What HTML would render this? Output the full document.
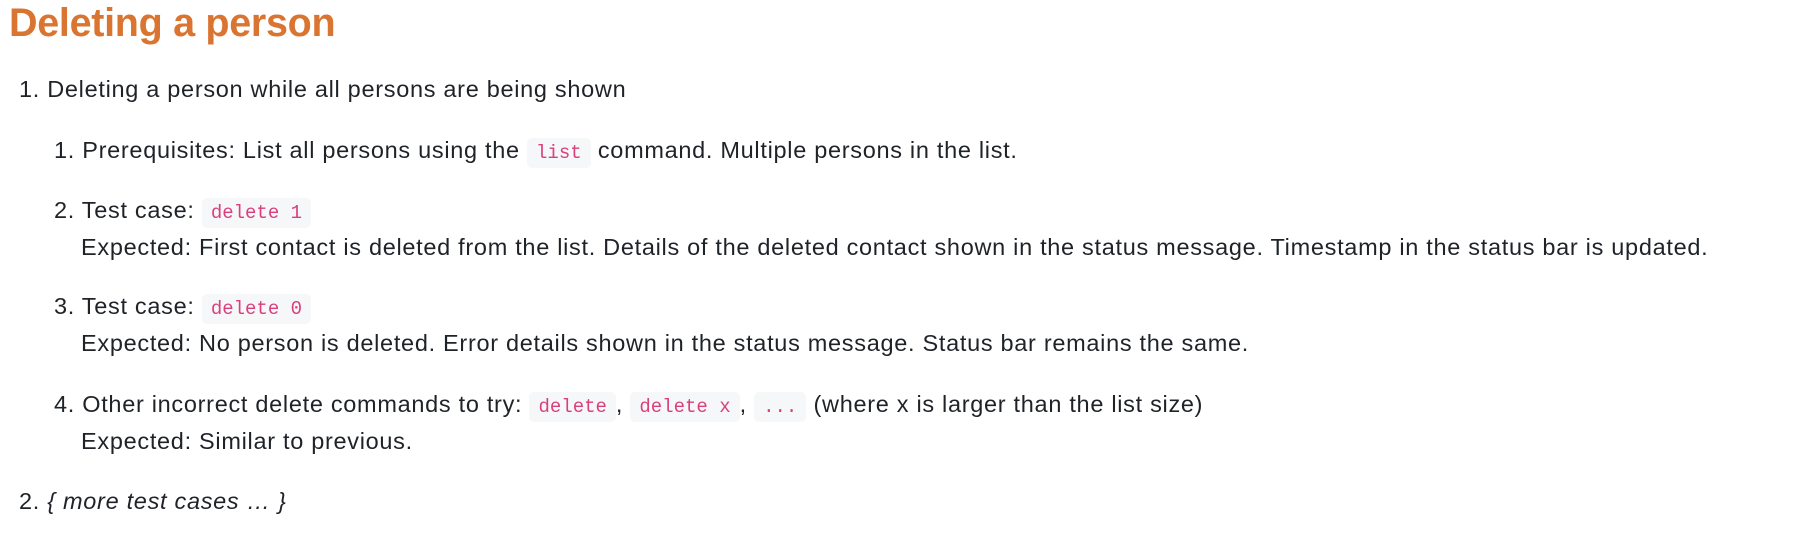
<!DOCTYPE html>
<html><head><meta charset="utf-8"><style>
body{margin:0;width:1814px;height:536px;background:#fff;font-family:"Liberation Sans",sans-serif;color:#1f2328;overflow:hidden;position:relative}
h1{position:absolute;left:9px;top:0;margin:0;font-size:39.5px;font-weight:bold;color:#d97530;letter-spacing:-0.3px;line-height:46px}
.l{position:absolute;font-size:23.5px;letter-spacing:0.7px;line-height:26px;white-space:nowrap}
code{font-family:"Liberation Mono",monospace;font-size:19px;letter-spacing:0;color:#d9417c;background:#f6f7f8;border-radius:5px;padding:4px 9px}
</style></head><body>
<h1>Deleting a person</h1>
<div class="l" style="left:19px;top:76px">1. Deleting a person while all persons are being shown</div>
<div class="l" style="left:54px;top:137px">1. Prerequisites: List all persons using the <code>list</code> command. Multiple persons in the list.</div>
<div class="l" style="left:54px;top:197px">2. Test case: <code>delete 1</code></div>
<div class="l" style="left:81px;top:234px">Expected: First contact is deleted from the list. Details of the deleted contact shown in the status message. Timestamp in the status bar is updated.</div>
<div class="l" style="left:54px;top:293px">3. Test case: <code>delete 0</code></div>
<div class="l" style="left:81px;top:330px">Expected: No person is deleted. Error details shown in the status message. Status bar remains the same.</div>
<div class="l" style="left:54px;top:391px">4. Other incorrect delete commands to try: <code>delete</code>, <code>delete x</code>, <code>...</code> (where x is larger than the list size)</div>
<div class="l" style="left:81px;top:428px">Expected: Similar to previous.</div>
<div class="l" style="left:19px;top:488px">2. <i>{ more test cases … }</i></div>
</body></html>
